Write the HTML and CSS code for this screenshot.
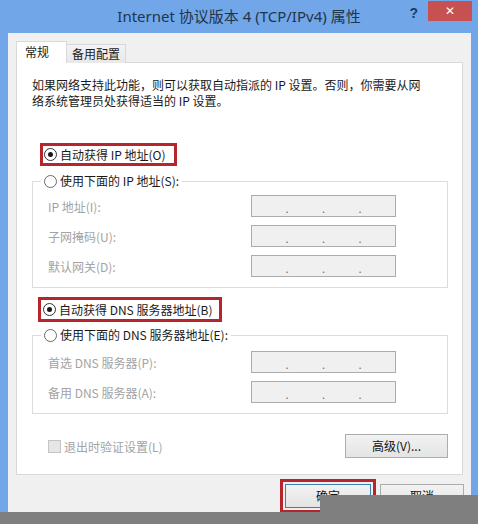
FILE: index.html
```html
<!DOCTYPE html>
<html>
<head>
  <meta charset='UTF-8'>
  <title>Internet 协议版本 4 (TCP/IPv4) 属性</title>
  <link rel="stylesheet" href="styles.css">
</head>
<body>
  <div class='window'>
    <!-- Title bar -->
    <div class='titlebar'>
      <div></div>
      <div class='title'>Internet 协议版本 4 (TCP/IPv4) 属性</div>
      <div class='caption-btns'>
        <span class='help'>?</span>
        <span class='close'>&#x2715;</span>
      </div>
    </div>

    <div class='client'>
      <!-- Tabs -->
      <div class='tabs'>
        <div class='tab active'>常规</div>
        <div class='tab'>备用配置</div>
      </div>

      <div class='panel'>
        <p class='intro'>如果网络支持此功能，则可以获取自动指派的 IP 设置。否则，你需要从网<br>络系统管理员处获得适当的 IP 设置。</p>

        <div class='mark mark-ip'>
          <span class='radio checked'></span><span>自动获得 IP 地址(O)</span>
        </div>

        <fieldset class='group group-ip'>
          <legend><span class='radio-row'><span class='radio'></span><span>使用下面的 IP 地址(S):</span></span></legend>
          <div class='field'><span class='label'>IP 地址(I):</span><div class='ipbox'><span>.</span><span>.</span><span>.</span></div></div>
          <div class='field'><span class='label'>子网掩码(U):</span><div class='ipbox'><span>.</span><span>.</span><span>.</span></div></div>
          <div class='field'><span class='label'>默认网关(D):</span><div class='ipbox'><span>.</span><span>.</span><span>.</span></div></div>
        </fieldset>

        <div class='mark mark-dns'>
          <span class='radio checked'></span><span>自动获得 DNS 服务器地址(B)</span>
        </div>

        <fieldset class='group group-dns'>
          <legend><span class='radio-row'><span class='radio'></span><span>使用下面的 DNS 服务器地址(E):</span></span></legend>
          <div class='field'><span class='label'>首选 DNS 服务器(P):</span><div class='ipbox'><span>.</span><span>.</span><span>.</span></div></div>
          <div class='field'><span class='label'>备用 DNS 服务器(A):</span><div class='ipbox'><span>.</span><span>.</span><span>.</span></div></div>
        </fieldset>

        <div class='bottom-row'>
          <div class='check-row'><span class='checkbox'></span><span>退出时验证设置(L)</span></div>
          <div class='btn btn-adv'>高级(V)...</div>
        </div>
      </div>

      <!-- Dialog buttons -->
      <div class='footer'>
        <div class='ok-mark'><div class='btn btn-ok'>确定</div></div>
        <div class='btn btn-cancel'>取消</div>
      </div>
    </div>

    <!-- grey cover over the bottom of the shot -->
    <div class='cover-block'></div>
    <div class='cover-band'></div>
  </div>
</body>
</html>
```

FILE: styles.css
```css
* { margin: 0; padding: 0; box-sizing: border-box; }
html, body { width: 478px; height: 524px; overflow: hidden; }
body { font-family: "Noto Sans CJK SC", "Noto Sans", sans-serif; font-size: 12px; color: #1a1a1a; background: #71a7e8; }

.window { position: relative; width: 478px; height: 524px; padding: 0 7px 0 8px; background: #71a7e8; display: flex; flex-direction: column; }

.titlebar { height: 33px; margin: 0 -7px 0 -8px; display: grid; grid-template-columns: 1fr auto 1fr; }
.title { font-family: "Noto Sans", "Noto Sans CJK SC", sans-serif; font-size: 15px; line-height: 33px; color: #22344c; white-space: nowrap; }
.caption-btns { display: flex; justify-content: flex-end; align-items: flex-start; }
.help { font-family: "Liberation Sans", sans-serif; font-weight: bold; font-size: 14px; color: #1d3a66; line-height: 16px; margin-top: 5px; margin-right: 10px; }
.close { width: 44px; height: 20px; margin-top: 1px; margin-right: 6px; background: #c75050; color: #fff; font-family: "DejaVu Sans", sans-serif; font-size: 12px; font-weight: bold; line-height: 20px; text-align: center; }

.client { flex: 1; background: #f0f0f0; padding: 8px 8px 0 8px; }

.tabs { display: flex; align-items: flex-end; height: 22px; position: relative; z-index: 1; }
.tab { height: 19px; padding: 0 5px; line-height: 18px; border: 1px solid #d9d9d9; border-bottom: none; background: linear-gradient(#f3f3f3, #e8e8e8); margin-left: -1px; }
.tab.active { height: 22px; width: 51px; margin-left: 0; padding-left: 8px; line-height: 20px; background: #fff; }

.panel { background: #fff; border: 1px solid #d9d9d9; margin-top: -1px; padding: 0 14px 16px 15px; }

.intro { margin-top: 14px; line-height: 16px; }

.mark { display: flex; align-items: center; border: 3px solid #b5252b; background: #fff; }
.mark-ip { width: 137px; height: 23px; margin: 34px 0 0 8px; padding-left: 1px; }
.mark-dns { width: 184px; height: 25px; margin: 9px 0 0 6px; padding-left: 2px; }
.mark > span:last-child { margin-left: 3px; }

.radio { display: inline-block; width: 13px; height: 13px; border-radius: 50%; border: 1px solid #6a6a6a; background: #fff; position: relative; flex: none; }
.radio.checked { border-color: #333; }
.radio.checked::after { content: ''; position: absolute; left: 3px; top: 3px; width: 5px; height: 5px; border-radius: 50%; background: #1a1a1a; }

.group { border: 1px solid #dcdcdc; margin-left: 0; padding: 0 0 10px 15px; }
.group legend { margin-left: -7px; padding: 0 3px; line-height: 16px; }
.radio-row { display: flex; align-items: center; gap: 3px; }
.group-ip { margin-top: 7px; padding-top: 6px; }
.group-dns { margin-top: 5px; padding-top: 8px; }

.field { display: flex; align-items: center; height: 22px; }
.field + .field { margin-top: 8px; }
.label { width: 203px; color: #a3a3a3; }
.ipbox { width: 145px; height: 22px; border: 1px solid #acacac; background: #f0f0f0; display: flex; justify-content: space-evenly; align-items: flex-end; color: #6a6a6a; font-size: 11px; line-height: 16px; }

.bottom-row { display: flex; justify-content: space-between; align-items: center; margin-top: 20px; padding-left: 16px; }
.check-row { display: flex; align-items: center; gap: 3px; color: #a3a3a3; }
.checkbox { width: 13px; height: 13px; border: 1px solid #c4c4c4; background: #e6e6e6; }

.btn { height: 24px; border: 1px solid #acacac; background: linear-gradient(#f2f2f2, #e4e4e4); text-align: center; line-height: 22px; color: #111; }
.btn-adv { width: 103px; }

.footer { display: flex; justify-content: flex-end; align-items: flex-start; gap: 4px; margin-top: 4px; margin-right: -1px; }
.ok-mark { border: 3px solid #b5252b; padding: 2px; }
.btn-ok { width: 86px; height: 24px; border-color: #3c7fb1; }
.btn-cancel { width: 84px; margin-top: 5px; }

.cover-block { position: absolute; left: 320px; top: 495px; right: 0; bottom: 0; background: #7f7f7f; }
.cover-band { position: absolute; left: 0; top: 512px; right: 0; bottom: 0; background: #7f7f7f; }
```
